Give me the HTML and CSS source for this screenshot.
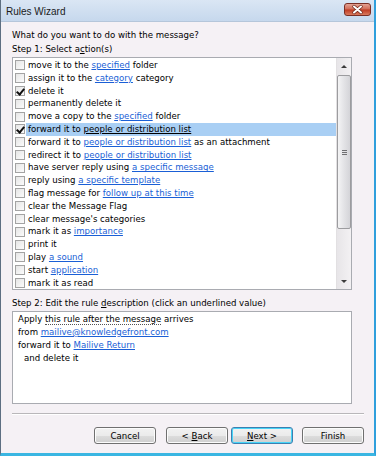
FILE: index.html
```html
<!DOCTYPE html>
<html lang="en">
<head>
  <meta charset="UTF-8">
  <title>Rules Wizard</title>
  <link rel="stylesheet" href="styles.css">
</head>
<body>
<div class="window">
  <div class="titlebar">
    <span class="title">Rules Wizard</span>
    <span class="close">
      <svg width="25" height="11" viewBox="0 0 25 11">
        <path d="M9 2.5 L16 8.5 M16 2.5 L9 8.5" stroke="#6a2418" stroke-width="3.4" stroke-linecap="round"/>
        <path d="M9 2.5 L16 8.5 M16 2.5 L9 8.5" stroke="#ffffff" stroke-width="2" stroke-linecap="round"/>
      </svg>
    </span>
  </div>

  <div class="content">
    <div class="label">What do you want to do with the message?</div>
    <div class="label">Step 1: Select a<u>c</u>tion(s)</div>

    <div class="listbox">
      <ul class="actions">
        <li><span class="check"></span><span class="text">move it to the <a>specified</a> folder</span></li>
        <li><span class="check"></span><span class="text">assign it to the <a>category</a> category</span></li>
        <li><span class="check checked"></span><span class="text">delete it</span></li>
        <li><span class="check"></span><span class="text">permanently delete it</span></li>
        <li><span class="check"></span><span class="text">move a copy to the <a>specified</a> folder</span></li>
        <li class="selected"><span class="check checked"></span><span class="text">forward it to <a>people or distribution list</a></span></li>
        <li><span class="check"></span><span class="text">forward it to <a>people or distribution list</a> as an attachment</span></li>
        <li><span class="check"></span><span class="text">redirect it to <a>people or distribution list</a></span></li>
        <li><span class="check"></span><span class="text">have server reply using <a>a specific message</a></span></li>
        <li><span class="check"></span><span class="text">reply using <a>a specific template</a></span></li>
        <li><span class="check"></span><span class="text">flag message for <a>follow up at this time</a></span></li>
        <li><span class="check"></span><span class="text">clear the Message Flag</span></li>
        <li><span class="check"></span><span class="text">clear message's categories</span></li>
        <li><span class="check"></span><span class="text">mark it as <a>importance</a></span></li>
        <li><span class="check"></span><span class="text">print it</span></li>
        <li><span class="check"></span><span class="text">play <a>a sound</a></span></li>
        <li><span class="check"></span><span class="text">start <a>application</a></span></li>
        <li><span class="check"></span><span class="text">mark it as read</span></li>
      </ul>
      <div class="scrollbar">
        <div class="sb-btn"><span class="arrow-up"></span></div>
        <div class="sb-track">
          <div class="thumb"><span class="grip"></span></div>
        </div>
        <div class="sb-btn"><span class="arrow-down"></span></div>
      </div>
    </div>

    <div class="label step2">Step 2: Edit the rule <u>d</u>escription (click an underlined value)</div>
    <div class="description">
      <div>Apply <span class="focus">this rule after the message</span> arrives</div>
      <div>from <a>mailive@knowledgefront.com</a></div>
      <div>forward it to <a>Mailive Return</a></div>
      <div class="indent">and delete it</div>
    </div>

    <div class="separator"></div>

    <div class="buttons">
      <button class="btn">Cancel</button>
      <button class="btn back">&lt; <u>B</u>ack</button>
      <button class="btn default"><u>N</u>ext &gt;</button>
      <button class="btn finish">Finish</button>
    </div>
  </div>
</div>
</body>
</html>
```

FILE: styles.css
```css
body {
  margin: 0;
  background: #f5f1f5;
  font-family: "DejaVu Sans", sans-serif;
  font-size: 8.6px;
  color: #000;
}
.window {
  width: 376px;
  height: 456px;
  box-sizing: border-box;
  display: flex;
  flex-direction: column;
  background: #f5f1f5;
  border-left: 1px solid #5d6f82;
  border-right: 2px solid #2f9fdc;
  border-bottom: 3px solid #3ab6e2;
  overflow: hidden;
}
.titlebar {
  height: 22px;
  flex: none;
  display: flex;
  align-items: center;
  justify-content: space-between;
  padding: 0 3px 0 5px;
  background: linear-gradient(#dae6f4, #c6d8ed);
  border-bottom: 1px solid #b5c6da;
  box-sizing: border-box;
}
.title {
  font-family: "Liberation Sans", sans-serif;
  font-size: 10px;
  color: #1b1b1b;
  padding-top: 1px;
}
.close {
  width: 27px;
  height: 13px;
  display: flex;
  align-items: center;
  justify-content: center;
  border: 1px solid #7a2f25;
  border-radius: 3px;
  background: linear-gradient(#e4a394, #d06a55 48%, #bf3a22 52%, #d97a5e);
  box-sizing: border-box;
  margin-top: -2px;
}
.content {
  flex: 1;
  display: flex;
  flex-direction: column;
  padding: 6px 11px 0 11px;
}
.label {
  line-height: 14px;
  height: 14px;
  white-space: nowrap;
}
a {
  color: #1a5fd6;
  text-decoration: underline;
}
.listbox {
  width: 340px;
  height: 233px;
  margin-top: 1px;
  box-sizing: border-box;
  border: 1px solid #a9abb1;
  background: #fff;
  display: flex;
  overflow: hidden;
}
.actions {
  list-style: none;
  margin: 0;
  padding: 1px 0 0 0;
  flex: 1;
  overflow: hidden;
}
.actions li {
  height: 12.8px;
  display: flex;
  align-items: center;
  white-space: nowrap;
}
.check {
  flex: none;
  width: 10px;
  height: 10px;
  margin-left: 2px;
  box-sizing: border-box;
  border: 1px solid #a3a3a3;
  background: linear-gradient(135deg, #e6e6e6, #fbfbfb);
  position: relative;
}
.check.checked::after {
  content: "";
  position: absolute;
  left: 2px;
  top: 0;
  width: 3px;
  height: 6px;
  border-right: 2px solid #111;
  border-bottom: 2px solid #111;
  transform: rotate(40deg);
}
.text {
  flex: 1;
  margin-left: 1px;
  padding-left: 2px;
  line-height: 12.8px;
  height: 12.8px;
}
.selected .text {
  background: #a9cff4;
}
.selected a {
  color: #000;
}
.scrollbar {
  width: 14px;
  flex: none;
  display: flex;
  flex-direction: column;
  background: linear-gradient(90deg, #e7e5e8, #f3f1f3);
  border-left: 1px solid #e2e0e2;
}
.sb-btn {
  height: 16px;
  flex: none;
  display: flex;
  align-items: center;
  justify-content: center;
}
.arrow-up {
  width: 0;
  height: 0;
  border-left: 3px solid transparent;
  border-right: 3px solid transparent;
  border-bottom: 3px solid #3b3b3b;
}
.arrow-down {
  width: 0;
  height: 0;
  border-left: 3px solid transparent;
  border-right: 3px solid transparent;
  border-top: 3px solid #3b3b3b;
}
.sb-track {
  flex: 1;
  padding-top: 1px;
}
.thumb {
  height: 154px;
  box-sizing: border-box;
  border: 1px solid #9c9c9f;
  border-radius: 2px;
  background: linear-gradient(90deg, #f4f4f5, #e3e3e6 50%, #d4d4d8);
  display: flex;
  align-items: center;
  justify-content: center;
}
.grip {
  width: 5px;
  height: 5px;
  background: repeating-linear-gradient(#6f6f72 0 1px, transparent 1px 2px);
}
.step2 {
  margin-top: 6px;
}
.description {
  width: 340px;
  height: 93px;
  margin-top: 1px;
  box-sizing: border-box;
  border: 1px solid #a9abb1;
  background: #fff;
  padding: 1px 0 0 5px;
  line-height: 12.9px;
  white-space: nowrap;
}
.focus {
  border-bottom: 1px dotted #555;
}
.indent {
  padding-left: 6px;
}
.separator {
  margin-top: 9px;
  width: 352px;
  height: 0;
  border-top: 1px solid #b9b7ba;
  border-bottom: 1px solid #fff;
}
.buttons {
  width: 352px;
  display: flex;
  justify-content: flex-end;
  margin-top: 12px;
}
.btn {
  width: 62px;
  height: 17px;
  padding: 0;
  font-family: "DejaVu Sans", sans-serif;
  font-size: 8.6px;
  color: #000;
  border: 1px solid #707070;
  border-radius: 3px;
  background: linear-gradient(#f2f2f2, #ebebeb 50%, #dddddd 51%, #cfcfcf);
  box-shadow: inset 0 0 0 1px #fcfcfc;
}
.back {
  margin-left: 10px;
}
.default {
  margin-left: 3px;
  border-color: #3c7fb1;
  box-shadow: inset 0 0 0 1px #48d4f8;
}
.finish {
  margin-left: 9px;
}
```
